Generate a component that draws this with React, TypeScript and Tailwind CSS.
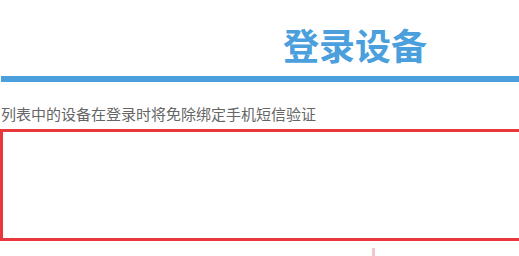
import React from 'react';

export default function App() {
    return (
        <div className="w-[519px] h-[256px] overflow-hidden bg-white" style={{ fontFamily: '"Noto Sans CJK SC", sans-serif' }}>
            <div className="w-[710px]">
                {/* 標題 */}
                <div className="pt-[24px] h-[76px]">
                    <h1 className="text-center text-[36px] leading-[40px] font-bold text-[#4a9fdc]">登录设备</h1>
                </div>
                <div className="ml-[1px] h-[6px] bg-[#4a9fdc]" />

                <p className="mt-[22px] pl-[1px] text-[15px] leading-[20px] text-[#666]">
                    列表中的设备在登录时将免除绑定手机短信验证
                </p>

                {/* 設備列表 */}
                <div className="mt-[5px] h-[112px] border-[3px] border-[#e8383d]" />

                <div className="mt-[7px] flex justify-center">
                    <div className="w-[3px] h-[8px] bg-[#f4c6cc] ml-[36px]" />
                </div>
            </div>
        </div>
    );
}
